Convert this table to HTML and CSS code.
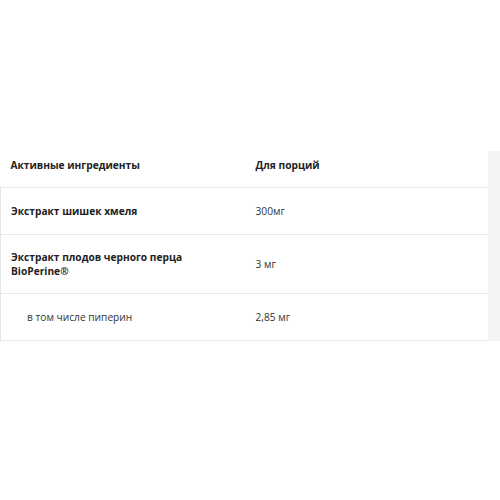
FILE: index.html
```html
<!DOCTYPE html>
<html lang="ru">
<head>
<meta charset="utf-8">
<link rel="stylesheet" href="styles.css">
</head>
<body>
<div class="wrap">
  <table class="ing">
    <thead>
      <tr><th class="c1">Активные ингредиенты</th><th class="c2">Для порций</th></tr>
    </thead>
    <tbody>
      <tr><td class="c1 b">Экстракт шишек хмеля</td><td class="c2">300мг</td></tr>
      <tr><td class="c1 b">Экстракт плодов черного перца<br>BioPerine®</td><td class="c2">3 мг</td></tr>
      <tr><td class="c1 sub">в том числе пиперин</td><td class="c2">2,85 мг</td></tr>
    </tbody>
  </table>
  <div class="shade"></div>
</div>
</body>
</html>
```
FILE: styles.css
```css
html, body { margin: 0; padding: 0; background: #fff; }
body { font-family: "Open Sans", "Noto Sans", sans-serif; color: #333; font-size: 10.2px; }
.wrap { position: relative; padding-top: 143px; width: 500px; }
.ing { border-collapse: collapse; width: 491px; table-layout: fixed; }
.ing th { font-weight: 700; color: #222; text-align: left; height: 44px; padding: 0 10px; line-height: 14px; vertical-align: middle; }
.ing td { height: 47px; padding: 15px 10px; line-height: 14px; vertical-align: middle; box-sizing: border-box; }
.ing tbody tr { border: 1px solid #e6e6e6; }
.c1 { width: 225px; }
.c2 { width: auto; }
.b { font-weight: 700; color: #222; }
.sub { padding-left: 26px !important; }
.shade { position: absolute; right: 0; top: 151px; width: 12px; height: 196px; background: #f3f3f5; }
```
